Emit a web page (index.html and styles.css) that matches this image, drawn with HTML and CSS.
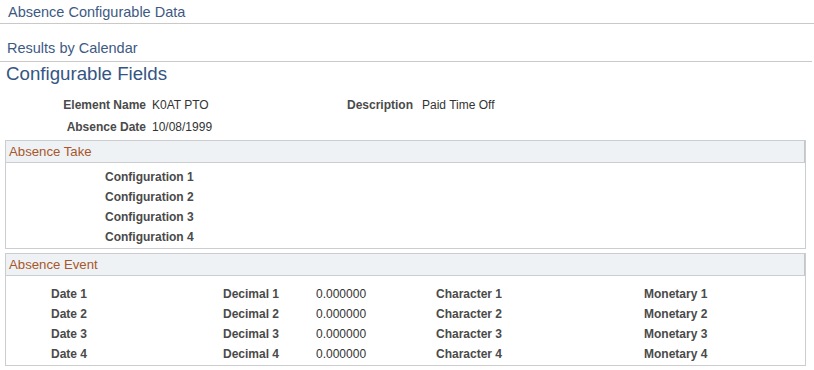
FILE: index.html
```html
<!DOCTYPE html>
<html>
<head>
<meta charset="utf-8">
<link rel="stylesheet" href="styles.css">
</head>
<body>
<div class="page-title">Absence Configurable Data</div>
<div class="sub-title">Results by Calendar</div>
<h1 class="section-title">Configurable Fields</h1>
<div class="header-fields">
  <div class="lbl">Element Name</div><div class="val">K0AT PTO</div>
  <div class="lbl">Description</div><div class="val val2">Paid Time Off</div>
  <div class="lbl">Absence Date</div><div class="val">10/08/1999</div>
</div>
<section class="group take">
  <div class="group-head">Absence Take</div>
  <div class="group-body take-body">
    <div class="lbl">Configuration 1</div>
    <div class="lbl">Configuration 2</div>
    <div class="lbl">Configuration 3</div>
    <div class="lbl">Configuration 4</div>
  </div>
</section>
<section class="group event">
  <div class="group-head">Absence Event</div>
  <div class="group-body event-body">
    <div class="lbl">Date 1</div><div class="lbl">Decimal 1</div><div class="val">0.000000</div><div class="lbl">Character 1</div><div class="lbl">Monetary 1</div>
    <div class="lbl">Date 2</div><div class="lbl">Decimal 2</div><div class="val">0.000000</div><div class="lbl">Character 2</div><div class="lbl">Monetary 2</div>
    <div class="lbl">Date 3</div><div class="lbl">Decimal 3</div><div class="val">0.000000</div><div class="lbl">Character 3</div><div class="lbl">Monetary 3</div>
    <div class="lbl">Date 4</div><div class="lbl">Decimal 4</div><div class="val">0.000000</div><div class="lbl">Character 4</div><div class="lbl">Monetary 4</div>
  </div>
</section>
</body>
</html>
```
FILE: styles.css
```css
body {
  margin: 0;
  background: #fff;
  font-family: "Liberation Sans", Arial, sans-serif;
  color: #333;
  width: 814px;
}
.page-title {
  height: 24px;
  line-height: 24px;
  padding-left: 8px;
  font-size: 14.5px;
  color: #3d5a84;
  border-bottom: 1px solid #c9c9c9;
  box-sizing: border-box;
  padding-bottom: 1px;
}
.sub-title {
  margin-top: 13px;
  height: 25px;
  line-height: 22px;
  padding-left: 7px;
  font-size: 14.5px;
  color: #3d5a84;
  border-bottom: 1px solid #c9c9c9;
  width: 812px;
  box-sizing: border-box;
}
.section-title {
  margin: 0;
  padding-left: 6px;
  font-size: 18.7px;
  font-weight: normal;
  color: #345583;
  height: 26px;
  line-height: 24px;
}
.header-fields {
  display: grid;
  grid-template-columns: 146px 155px 112px auto;
  grid-auto-rows: 22px;
  align-items: center;
  padding-top: 6px;
  font-size: 12px;
  height: 46px;
  box-sizing: content-box;
}
.lbl {
  font-weight: bold;
  color: #4a4a4a;
  font-size: 12px;
}
.header-fields .lbl { text-align: right; }
.header-fields .val { padding-left: 6px; }
.header-fields .val2 { padding-left: 9px; }
.val { color: #333; font-size: 12px; }
.group {
  margin-left: 5px;
  width: 801px;
  box-sizing: border-box;
  border: 1px solid #cbcdd1;
}
.group-head {
  height: 22px;
  line-height: 21px;
  padding-left: 3px;
  font-size: 13.2px;
  color: #a7572b;
  background: #eff2f4;
  border-bottom: 1px solid #cbcdd1;
  border-right: 1px solid #c3c6cb;
  box-sizing: border-box;
}
.take-body {
  padding: 4px 0 1px 99px;
  display: grid;
  grid-auto-rows: 20px;
  align-items: center;
}
.event { margin-top: 4px; }
.event-body {
  display: grid;
  grid-template-columns: 172px 93px 120px 208px auto;
  grid-auto-rows: 20px;
  align-items: center;
  padding: 8px 0 1px 45px;
}
```
